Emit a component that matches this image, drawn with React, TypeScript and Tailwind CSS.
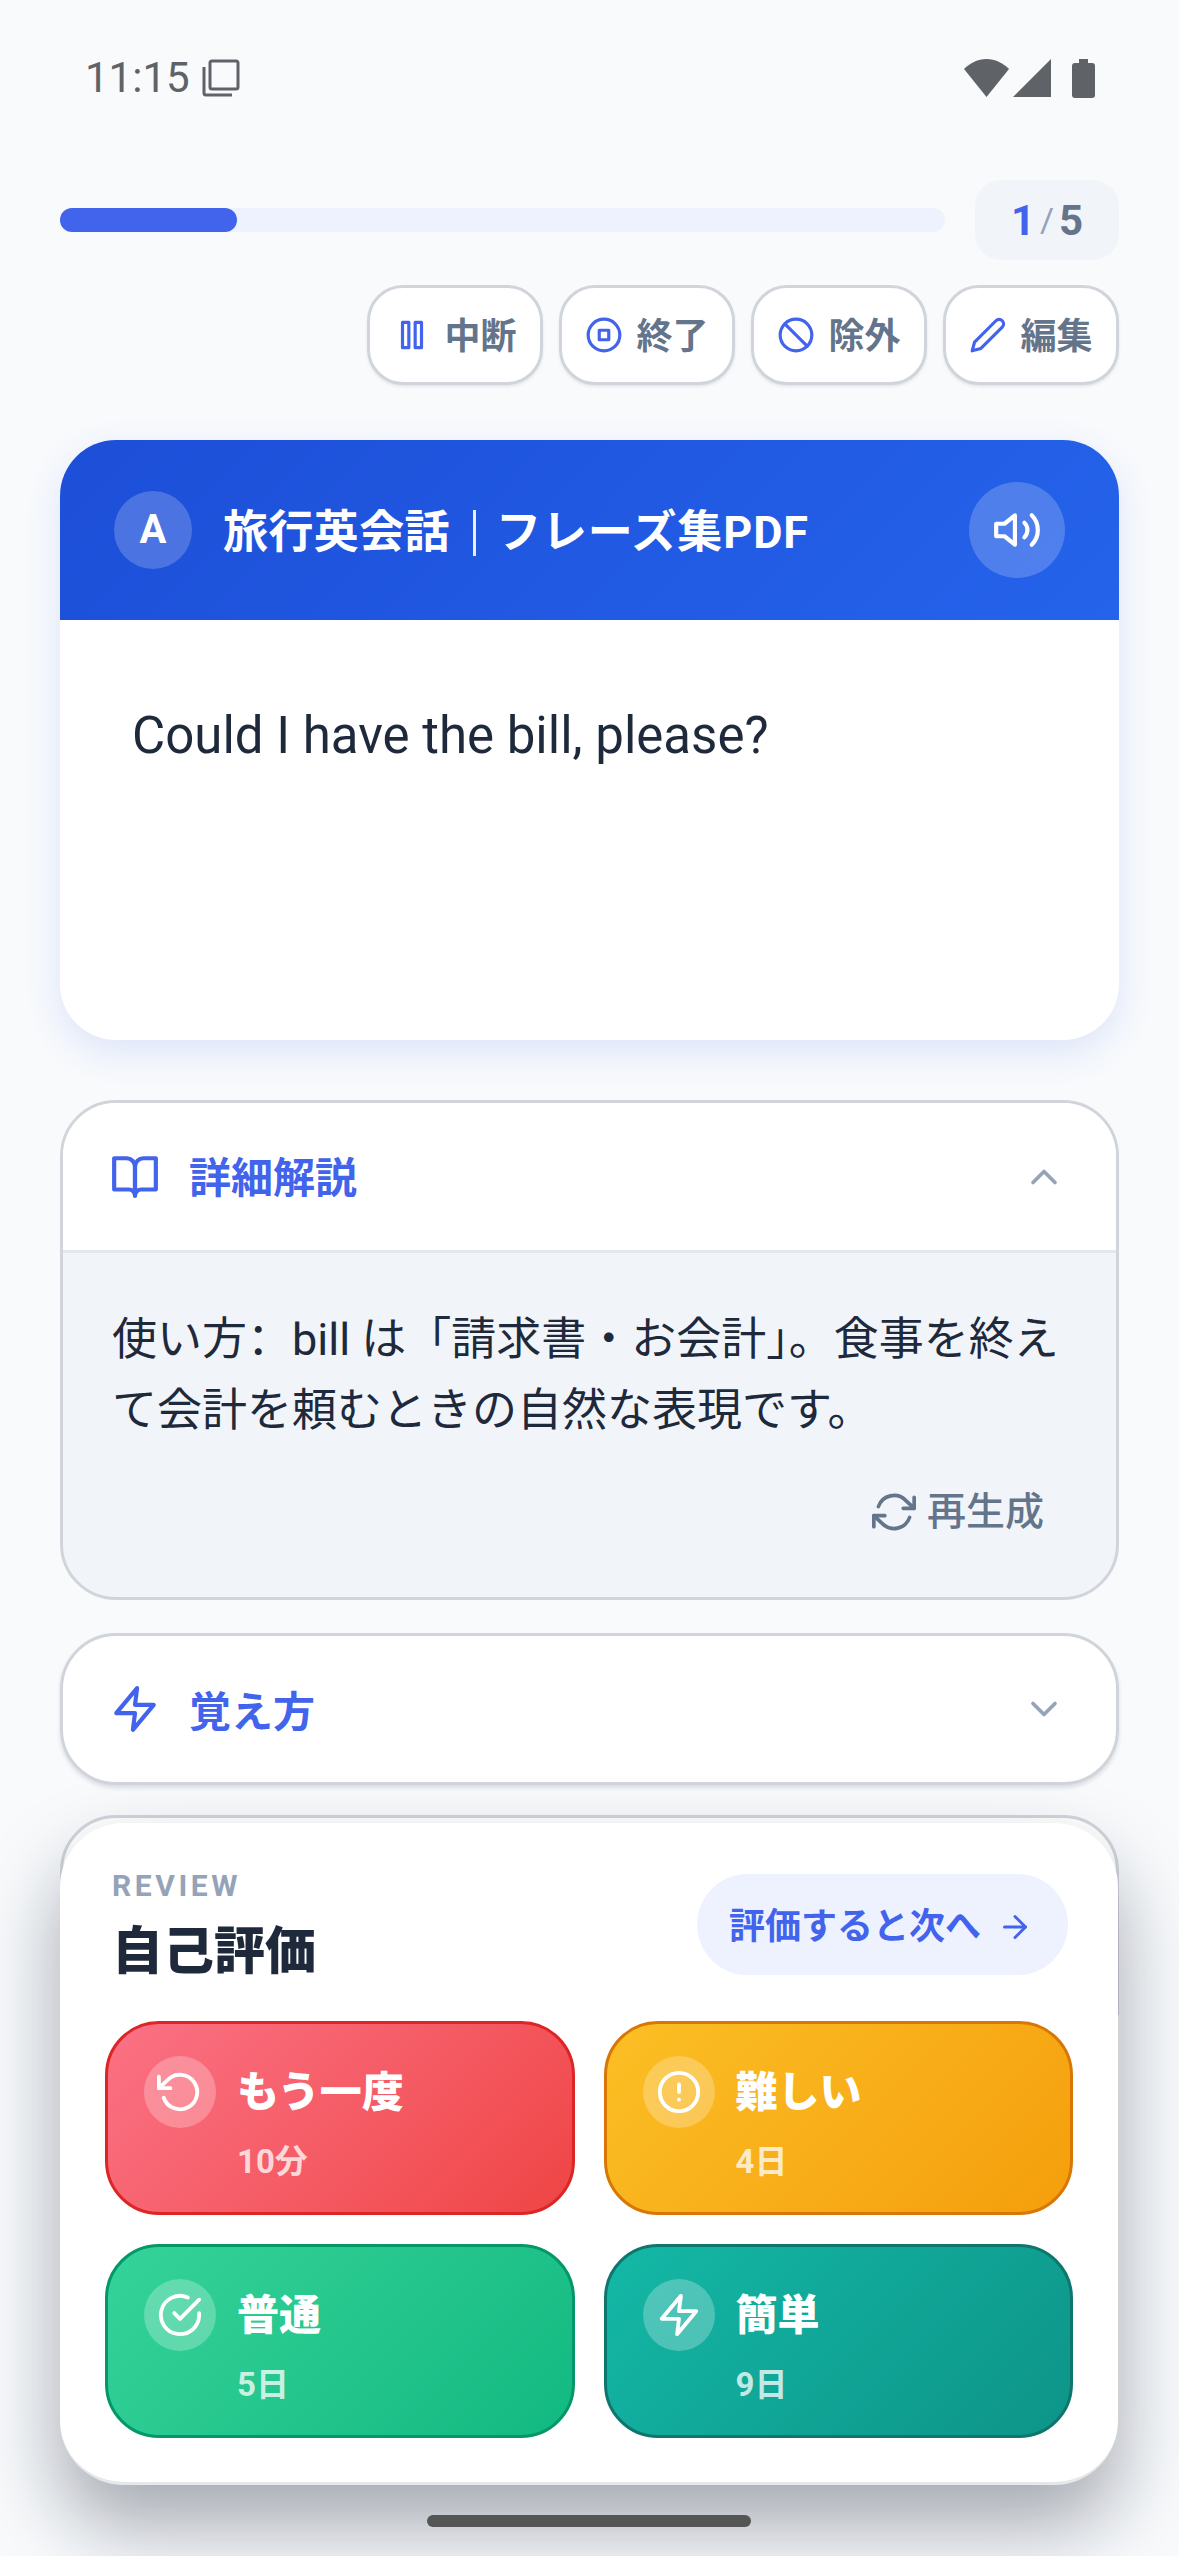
import type { ReactNode } from 'react';
import {
  FiAlertCircle,
  FiArrowRight,
  FiBookOpen,
  FiCheckCircle,
  FiChevronDown,
  FiChevronUp,
  FiEdit2,
  FiPause,
  FiRefreshCw,
  FiRotateCcw,
  FiSlash,
  FiStopCircle,
  FiVolume2,
  FiZap,
} from 'react-icons/fi';

const font = 'font-["Roboto","Noto_Sans_CJK_JP",sans-serif]';

function ActionButton({ icon, label }: { icon: ReactNode; label: string }) {
  return (
    <button className="flex h-[100px] w-[176px] items-center justify-center gap-[13px] rounded-[36px] border-[3px] border-[#d1d5db] bg-white text-[36px] font-semibold text-[#64748b] shadow-[0_2px_3px_rgba(15,23,42,0.08)]">
      <span className="text-[#4263eb]">{icon}</span>
      <span className="pt-[4px]">{label}</span>
    </button>
  );
}

function Rating({ icon, label, sub, cls }: { icon: ReactNode; label: string; sub: string; cls: string }) {
  return (
    <button className={`flex h-[194px] flex-col rounded-[54px] border-[3px] pl-[36px] pt-[30px] text-left text-white ${cls}`}>
      <div className="flex items-center gap-[21px]">
        <span className="flex h-[72px] w-[72px] items-center justify-center rounded-full bg-white/25">{icon}</span>
        <span className="pt-[3px] text-[42px] font-extrabold leading-[72px]">{label}</span>
      </div>
      <div className="ml-[93px] mt-[11px] text-[33px] font-bold leading-[44px] text-white/75">{sub}</div>
    </button>
  );
}

export default function App() {
  return (
    <div className={`relative h-[2556px] w-[1179px] overflow-hidden bg-[#f8fafc] ${font}`}>
      <div className="flex h-[156px] items-center justify-between pl-[85px] pr-[84px] text-[#5f6368]">
        <div className="flex items-center gap-[12px] text-[42px] leading-none">
          11:15
          <svg width="38" height="38" viewBox="0 0 38 38" fill="none" stroke="currentColor" strokeWidth="3">
            <rect x="8" y="2" width="28" height="28" rx="2" />
            <path d="M2 8v26a2 2 0 0 0 2 2h26" />
          </svg>
        </div>
        <div className="flex items-center">
          <svg width="45" height="38" viewBox="0 0 45 38" fill="currentColor">
            <path d="M22.5 38 0 10C6 4 14 0 22.5 0S39 4 45 10Z" />
          </svg>
          <svg className="ml-[4px]" width="38" height="38" viewBox="0 0 38 38" fill="currentColor">
            <path d="M38 0v38H0Z" />
          </svg>
          <svg className="ml-[21px]" width="23" height="39" viewBox="0 0 23 39" fill="currentColor">
            <path d="M7 0h9v4h4a3 3 0 0 1 3 3v29a3 3 0 0 1-3 3H3a3 3 0 0 1-3-3V7a3 3 0 0 1 3-3h4Z" />
          </svg>
        </div>
      </div>

      <div className="px-[60px]">
        <div className="mt-[24px] flex items-center gap-[30px]">
          <div className="h-[24px] flex-1 rounded-full bg-[#eef2ff]">
            <div className="h-full w-[20%] rounded-full bg-[#4263eb]" />
          </div>
          <div className="flex h-[80px] w-[144px] items-center justify-center gap-[5px] rounded-[26px] bg-[#f1f5f9] text-[42px] font-bold">
            <span className="text-[#4263eb]">1</span>
            <span className="text-[34px] font-normal text-[#94a3b8]">/</span>
            <span className="text-[#64748b]">5</span>
          </div>
        </div>

        <div className="mt-[25px] flex justify-end gap-[16px]">
          <ActionButton icon={<FiPause size={38} />} label="中断" />
          <ActionButton icon={<FiStopCircle size={38} />} label="終了" />
          <ActionButton icon={<FiSlash size={38} />} label="除外" />
          <ActionButton icon={<FiEdit2 size={38} />} label="編集" />
        </div>

        <section className="mt-[55px] h-[600px] overflow-hidden rounded-[56px] bg-white shadow-[0_12px_36px_rgba(66,99,235,0.14)]">
          <div className="flex h-[180px] items-center bg-linear-135 from-[#1d4ed8] to-[#2563eb] px-[54px] text-white">
            <div className="flex h-[78px] w-[78px] items-center justify-center rounded-full bg-white/20 text-[40px] font-bold">A</div>
            <div className="ml-[31px] flex flex-1 items-center pt-[6px] text-[45px] font-bold tracking-[0.4px]">
              旅行英会話
              <span className="ml-[23px] mr-[20px] h-[46px] w-[3px] bg-white/90" />
              <span className="tracking-[0.9px]">フレーズ集PDF</span>
            </div>
            <div className="flex h-[96px] w-[96px] items-center justify-center rounded-full bg-white/20">
              <FiVolume2 size={50} />
            </div>
          </div>
          <p className="pl-[72px] pt-[86px] text-[51px] leading-[60px] text-[#1e293b]">Could I have the bill, please?</p>
        </section>

        <section className="mt-[60px] h-[500px] overflow-hidden rounded-[56px] border-[3px] border-[#d1d5db] bg-[#f1f5f9]">
          <div className="flex h-[150px] items-center justify-between border-b-[3px] border-[#e2e8f0] bg-white pl-[47px] pr-[50px]">
            <div className="flex items-center gap-[29px] text-[42px] font-semibold text-[#4263eb]">
              <FiBookOpen size={50} />
              <span className="pt-[4px]">詳細解説</span>
            </div>
            <FiChevronUp size={44} className="text-[#94a3b8]" />
          </div>
          <div className="px-[49px] pt-[51px]">
            <p className="text-[45px] leading-[71px] text-[#1e293b]">
              使い方<span className='inline-block w-[45px] font-["Noto_Sans_CJK_SC"] leading-none'>：</span>bill は「請求書・お会計」。食事を終え
              <br />
              て会計を頼むときの自然な表現です。
            </p>
            <div className="mt-[37px] flex items-center justify-end gap-[11px] pr-[23px] text-[39px] font-medium text-[#64748b]">
              <FiRefreshCw size={44} />
              再生成
            </div>
          </div>
        </section>

        <section className="mt-[33px] flex h-[152px] items-center justify-between rounded-[56px] border-[3px] border-[#d1d5db] bg-white pl-[47px] pr-[50px] shadow-[0_3px_4px_rgba(15,23,42,0.12)]">
          <div className="flex items-center gap-[29px] text-[42px] font-semibold text-[#4263eb]">
            <FiZap size={50} />
            <span className="pt-[6px]">覚え方</span>
          </div>
          <FiChevronDown size={44} className="text-[#94a3b8]" />
        </section>

        <section className="mt-[30px] h-[200px] rounded-t-[56px] border-[3px] border-[#d1d5db] bg-white" />
      </div>

      <div className="absolute left-[60px] top-[1823px] h-[662px] w-[1058px] rounded-[64px] border-b-[3px] border-[#e5e7eb] bg-white px-[45px] pt-[40px] shadow-[0_40px_80px_rgba(15,23,42,0.36)]">
        <div className="flex items-start justify-between">
          <div className="pl-[7px]">
            <div className="text-[30px] font-bold leading-[46px] tracking-[0.12em] text-[#94a3b8]">REVIEW</div>
            <div className="pt-[6px] text-[51px] font-extrabold leading-[74px] text-[#1e293b]">自己評価</div>
          </div>
          <div className="mr-[5px] mt-[11px] flex h-[101px] w-[371px] items-center justify-center gap-[16px] rounded-full bg-[#eef2ff] pr-[3px] pt-[5px] text-[36px] font-bold text-[#4263eb]">
            評価すると次へ
            <FiArrowRight size={36} />
          </div>
        </div>
        <div className="mt-[32px] grid grid-cols-2 gap-[29px]">
          <Rating
            icon={<FiRotateCcw size={46} />}
            label="もう一度"
            sub="10分"
            cls="border-[#dc2626] bg-linear-135 from-[#fb7185] to-[#ef4444]"
          />
          <Rating
            icon={<FiAlertCircle size={46} />}
            label="難しい"
            sub="4日"
            cls="border-[#d97706] bg-linear-135 from-[#fbbf24] to-[#f59e0b]"
          />
          <Rating
            icon={<FiCheckCircle size={46} />}
            label="普通"
            sub="5日"
            cls="border-[#059669] bg-linear-135 from-[#34d399] to-[#10b981]"
          />
          <Rating
            icon={<FiZap size={46} />}
            label="簡単"
            sub="9日"
            cls="border-[#0f766e] bg-linear-135 from-[#14b8a6] to-[#0d9488]"
          />
        </div>
      </div>

      <div className="absolute bottom-[29px] left-[427px] h-[12px] w-[324px] rounded-full bg-[#555555]" />
    </div>
  );
}
